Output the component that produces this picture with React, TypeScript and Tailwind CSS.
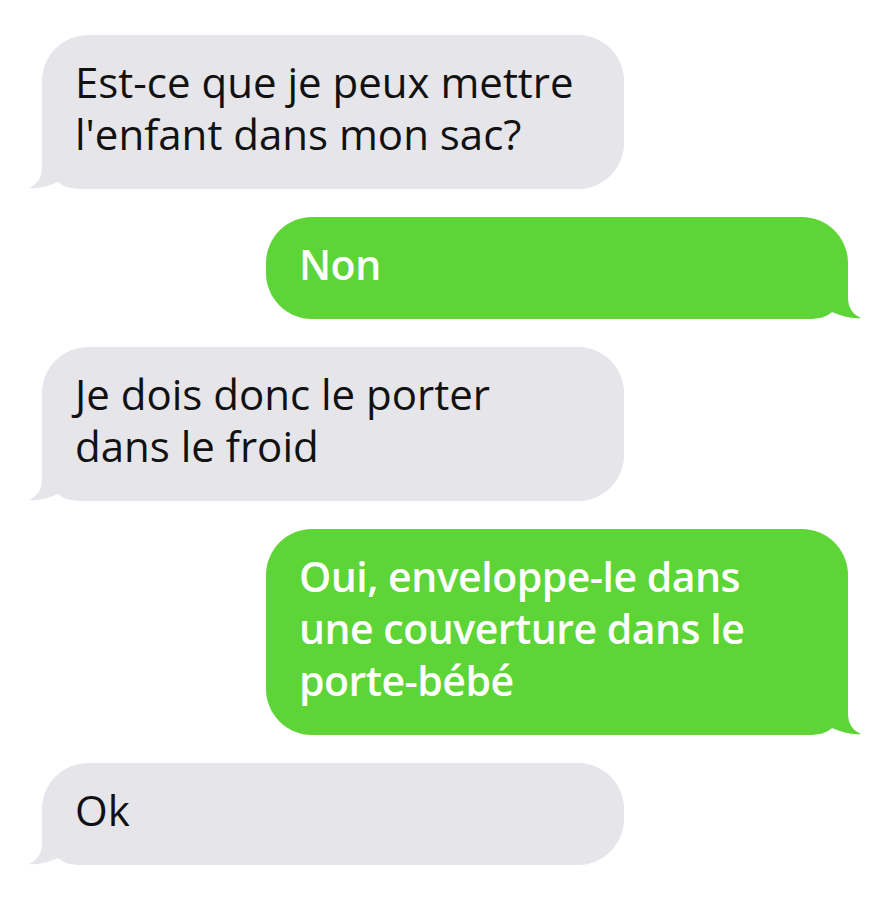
import React from 'react';

type Msg = { from: 'them' | 'me'; lines: string[] };

const messages: Msg[] = [
  { from: 'them', lines: ['Est-ce que je peux mettre', "l'enfant dans mon sac?"] },
  { from: 'me', lines: ['Non'] },
  { from: 'them', lines: ['Je dois donc le porter', 'dans le froid'] },
  { from: 'me', lines: ['Oui, enveloppe-le dans', 'une couverture dans le', 'porte-bébé'] },
  { from: 'them', lines: ['Ok'] },
];

function Tail({ side, color }: { side: 'left' | 'right'; color: string }) {
  // tail tip sits at the bottom-left corner; the bubble's edge is at x=14
  const d = 'M14,0 L14,28 C14,38 10,45 1,49 C10,50 20,47.5 30,43 C36,48 42,50 54,50 L70,50 L70,0 Z';
  return (
    <svg
      width="70"
      height="50"
      viewBox="0 0 70 50"
      className={side === 'left' ? 'absolute -left-[14px] bottom-0' : 'absolute -right-[14px] bottom-0 -scale-x-100'}
    >
      <path d={d} fill={color} />
    </svg>
  );
}

function Bubble({ msg }: { msg: Msg }) {
  const mine = msg.from === 'me';
  return (
    <div className={`flex ${mine ? 'justify-end pr-[42px]' : 'justify-start pl-[42px]'}`}>
      <div
        className={`relative w-[582px] rounded-[46px] px-[33px] py-[25px] leading-[52px] ${
          mine
            ? 'bg-[#5dd536] text-white font-semibold text-[41px] tracking-[-0.5px]'
            : 'bg-[#e5e5ea] text-[#111] text-[42px]'
        }`}
      >
        <Tail side={mine ? 'right' : 'left'} color={mine ? '#5dd536' : '#e5e5ea'} />
        <div className="relative -mt-[4px] mb-[4px]">
          {msg.lines.map((l, i) => (
            <div key={i} className="whitespace-nowrap">{l}</div>
          ))}
        </div>
      </div>
    </div>
  );
}

export default function App() {
  return (
    <div
      className="w-[890px] h-[902px] bg-white flex flex-col gap-[28px] pt-[35px]"
      style={{ fontFamily: '"Open Sans", "Noto Sans", sans-serif' }}
    >
      {messages.map((m, i) => (
        <Bubble key={i} msg={m} />
      ))}
    </div>
  );
}
